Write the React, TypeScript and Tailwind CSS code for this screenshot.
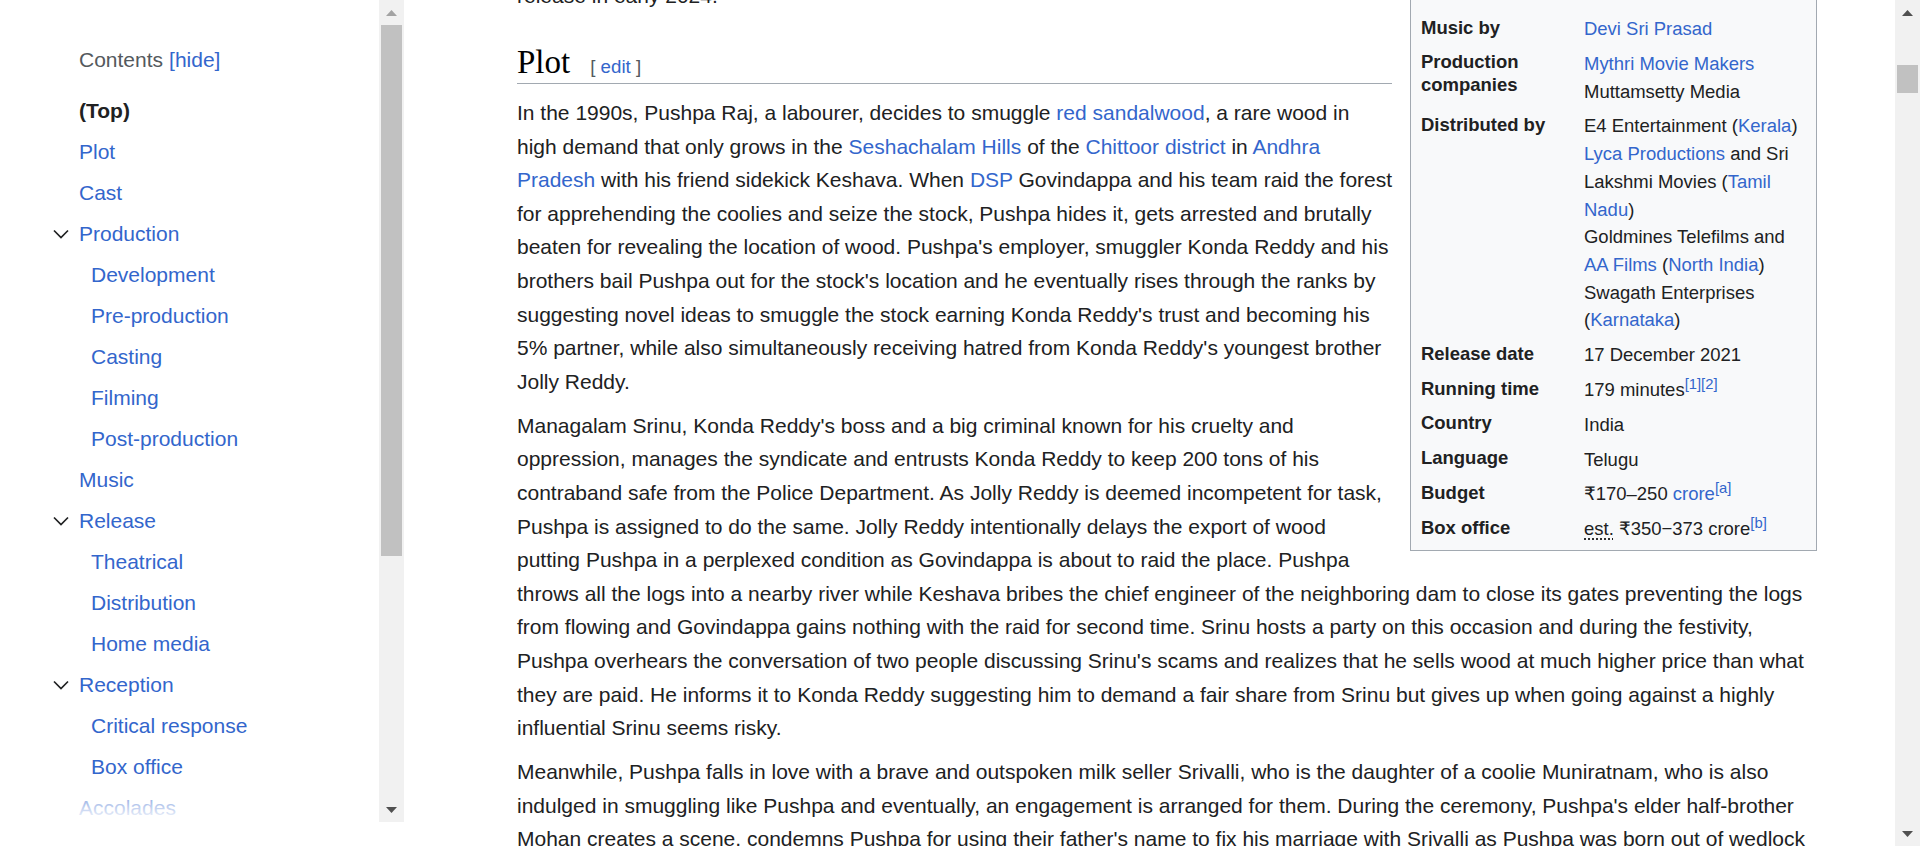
import React from 'react';

type Node = React.ReactNode;

const A = ({ children }: { children: Node }) => <a className="text-[#3366cc]">{children}</a>;

function Lines({ lines }: { lines: Node[] }) {
  return (
    <>
      {lines.map((l, i) => (
        <React.Fragment key={i}>
          {l}
          {i < lines.length - 1 && <br />}
        </React.Fragment>
      ))}
    </>
  );
}

const toc: { label: string; open?: boolean; children?: string[] }[] = [
  { label: 'Plot' },
  { label: 'Cast' },
  { label: 'Production', open: true, children: ['Development', 'Pre-production', 'Casting', 'Filming', 'Post-production'] },
  { label: 'Music' },
  { label: 'Release', open: true, children: ['Theatrical', 'Distribution', 'Home media'] },
  { label: 'Reception', open: true, children: ['Critical response', 'Box office'] },
  { label: 'Accolades' },
];

const Chevron = () => (
  <svg width="16" height="10" viewBox="0 0 16 10" className="text-[#202122]">
    <path d="M1 1.5 L8 8.5 L15 1.5" fill="none" stroke="currentColor" strokeWidth="1.7" />
  </svg>
);

function Scrollbar({ thumbOffset, thumbHeight, upLight }: { thumbOffset: number; thumbHeight: number; upLight?: boolean }) {
  return (
    <div className="flex h-full w-[25px] shrink-0 flex-col bg-[#f1f1f1]">
      <div className="flex h-[25px] shrink-0 items-center justify-center">
        <svg width="11" height="6" viewBox="0 0 11 6">
          <polygon points="0,6 5.5,0 11,6" fill={upLight ? '#a3a3a3' : '#505050'} />
        </svg>
      </div>
      <div className="mx-[2px] bg-[#c1c1c1]" style={{ marginTop: thumbOffset, height: thumbHeight }} />
      <div className="flex-1" />
      <div className="flex h-[25px] shrink-0 items-center justify-center">
        <svg width="11" height="6" viewBox="0 0 11 6">
          <polygon points="0,0 5.5,6 11,0" fill="#505050" />
        </svg>
      </div>
    </div>
  );
}

function Sidebar() {
  return (
    <div className="flex w-[404px] shrink-0 flex-col">
      <div className="flex h-[822px]">
        <div className="relative w-[379px] overflow-hidden text-[21px]">
          <div className="mt-[39.5px] flex h-[41px] items-center pl-[79px]">
            <span className="text-[#54595d]">Contents</span>
            <A><span className="ml-[6px]">[hide]</span></A>
          </div>
          <ul className="mt-[10px]">
            <li className="flex h-[41px] items-center pl-[79px] font-bold text-[#202122]">(Top)</li>
            {toc.map((item) => (
              <li key={item.label}>
                {item.open ? (
                  <div className="flex h-[41px] items-center pl-[53px]">
                    <span className="flex w-[26px]"><Chevron /></span>
                    <A>{item.label}</A>
                  </div>
                ) : (
                  <div className="flex h-[41px] items-center pl-[79px]">
                    <A>{item.label}</A>
                  </div>
                )}
                {item.children && (
                  <ul>
                    {item.children.map((c) => (
                      <li key={c} className="flex h-[41px] items-center pl-[91px]">
                        <A>{c}</A>
                      </li>
                    ))}
                  </ul>
                )}
              </li>
            ))}
          </ul>
          <div className="absolute bottom-0 left-0 right-0 h-[48px] bg-linear-to-b from-white/0 to-white" />
        </div>
        <Scrollbar thumbOffset={0} thumbHeight={531} upLight />
      </div>
    </div>
  );
}

const rows: { label: Node; value: Node }[] = [
  { label: 'Music by', value: <A>Devi Sri Prasad</A> },
  {
    label: <>Production<br />companies</>,
    value: <Lines lines={[<A>Mythri Movie Makers</A>, 'Muttamsetty Media']} />,
  },
  {
    label: 'Distributed by',
    value: (
      <Lines
        lines={[
          <>E4 Entertainment (<A>Kerala</A>)</>,
          <><A>Lyca Productions</A> and Sri</>,
          <>Lakshmi Movies (<A>Tamil</A></>,
          <><A>Nadu</A>)</>,
          'Goldmines Telefilms and',
          <><A>AA Films</A> (<A>North India</A>)</>,
          'Swagath Enterprises',
          <>(<A>Karnataka</A>)</>,
        ]}
      />
    ),
  },
  { label: 'Release date', value: '17 December 2021' },
  {
    label: 'Running time',
    value: <>179 minutes<sup className="text-[14.8px] text-[#3366cc]">[1][2]</sup></>,
  },
  { label: 'Country', value: 'India' },
  { label: 'Language', value: 'Telugu' },
  {
    label: 'Budget',
    value: <>₹170–250 <A>crore</A><sup className="text-[14.8px] text-[#3366cc]">[a]</sup></>,
  },
  {
    label: 'Box office',
    value: (
      <>
        <span className="underline decoration-dotted underline-offset-[3px]">est.</span> ₹350−373 crore
        <sup className="text-[14.8px] text-[#3366cc]">[b]</sup>
      </>
    ),
  },
];

function Infobox() {
  return (
    <div className="ml-[18px] mt-px w-[407px] shrink-0 border border-[#a2a9b1] bg-[#f8f9fa] px-[3px] pb-[3.5px] pt-[30.5px] text-[18.48px] text-[#202122]">
      <div className="grid grid-cols-[163px_1fr]">
        {rows.map((r, i) => (
          <React.Fragment key={i}>
            <div className="px-[7px] pb-[3.5px] pt-[5px] font-bold leading-[22.2px]">{r.label}</div>
            <div className="whitespace-nowrap px-[7px] py-[3.55px] leading-[27.72px]">{r.value}</div>
          </React.Fragment>
        ))}
      </div>
    </div>
  );
}

const para = 'whitespace-nowrap text-[21px] leading-[33.6px] text-[#202122]';

export default function App() {
  return (
    <div className="flex h-[846px] w-[1920px] overflow-hidden bg-white font-['Liberation_Sans',Arial,'DejaVu_Sans',sans-serif]">
      <Sidebar />
      <main className="min-w-0 flex-1 overflow-hidden">
        <div className="ml-[113px] w-[1300px]">
          <div className="-mt-[21px] flex items-start">
            <div className="min-w-0 flex-1">
              <p className={para}>release in early 2024.</p>
              <h2 className="mt-[29.4px] overflow-hidden border-b border-[#a2a9b1] font-['Liberation_Serif','Times_New_Roman',serif] text-[33px] leading-[41px] text-black">
                Plot
                <span className="ml-[20px] font-['Liberation_Sans',Arial,sans-serif] text-[18.7px] leading-none text-[#54595d]">
                  [ <A>edit</A> ]
                </span>
              </h2>
              <p className={`${para} mt-[12px]`}>
                <Lines
                  lines={[
                    <>In the 1990s, Pushpa Raj, a labourer, decides to smuggle <A>red sandalwood</A>, a rare wood in</>,
                    <>high demand that only grows in the <A>Seshachalam Hills</A> of the <A>Chittoor district</A> in <A>Andhra</A></>,
                    <><A>Pradesh</A> with his friend sidekick Keshava. When <A>DSP</A> Govindappa and his team raid the forest</>,
                    'for apprehending the coolies and seize the stock, Pushpa hides it, gets arrested and brutally',
                    "beaten for revealing the location of wood. Pushpa's employer, smuggler Konda Reddy and his",
                    "brothers bail Pushpa out for the stock's location and he eventually rises through the ranks by",
                    "suggesting novel ideas to smuggle the stock earning Konda Reddy's trust and becoming his",
                    "5% partner, while also simultaneously receiving hatred from Konda Reddy's youngest brother",
                    'Jolly Reddy.',
                  ]}
                />
              </p>
              <p className={`${para} mt-[10.5px]`}>
                <Lines
                  lines={[
                    "Managalam Srinu, Konda Reddy's boss and a big criminal known for his cruelty and",
                    'oppression, manages the syndicate and entrusts Konda Reddy to keep 200 tons of his',
                    'contraband safe from the Police Department. As Jolly Reddy is deemed incompetent for task,',
                    'Pushpa is assigned to do the same. Jolly Reddy intentionally delays the export of wood',
                    'putting Pushpa in a perplexed condition as Govindappa is about to raid the place. Pushpa',
                  ]}
                />
              </p>
            </div>
            <Infobox />
          </div>
          <p className={para}>
            <Lines
              lines={[
                'throws all the logs into a nearby river while Keshava bribes the chief engineer of the neighboring dam to close its gates preventing the logs',
                'from flowing and Govindappa gains nothing with the raid for second time. Srinu hosts a party on this occasion and during the festivity,',
                "Pushpa overhears the conversation of two people discussing Srinu's scams and realizes that he sells wood at much higher price than what",
                'they are paid. He informs it to Konda Reddy suggesting him to demand a fair share from Srinu but gives up when going against a highly',
                'influential Srinu seems risky.',
              ]}
            />
          </p>
          <p className={`${para} mt-[10.5px]`}>
            <Lines
              lines={[
                'Meanwhile, Pushpa falls in love with a brave and outspoken milk seller Srivalli, who is the daughter of a coolie Muniratnam, who is also',
                "indulged in smuggling like Pushpa and eventually, an engagement is arranged for them. During the ceremony, Pushpa's elder half-brother",
                "Mohan creates a scene, condemns Pushpa for using their father's name to fix his marriage with Srivalli as Pushpa was born out of wedlock",
              ]}
            />
          </p>
        </div>
      </main>
      <Scrollbar thumbOffset={40} thumbHeight={28} />
    </div>
  );
}
